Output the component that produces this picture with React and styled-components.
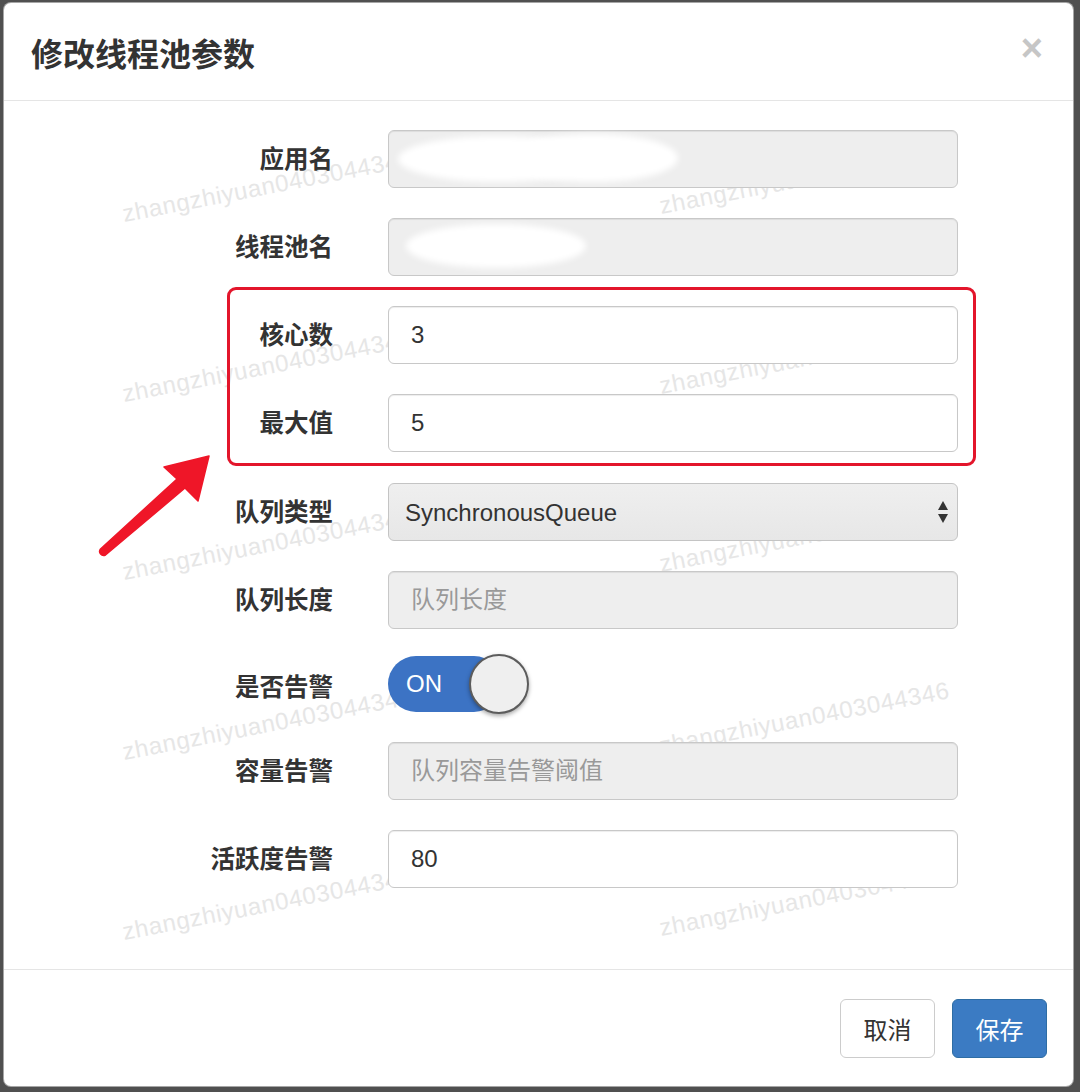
import React from "react"
import styled, { createGlobalStyle } from "styled-components"

const GlobalStyle = createGlobalStyle`
  * { box-sizing: border-box; }
  body {
    margin: 0;
    background: #505050;
    font-family: "Liberation Sans", "Noto Sans CJK SC", sans-serif;
    color: #333;
  }
`

const Modal = styled.div`
  position: relative;
  width: 1071px;
  height: 1085px;
  margin: 2px 0 0 3px;
  background: #fff;
  border: 1px solid rgba(0, 0, 0, 0.35);
  border-radius: 8px;
  overflow: hidden;
  display: flex;
  flex-direction: column;
`

const Header = styled.div`
  height: 98px;
  flex: none;
  display: flex;
  align-items: center;
  justify-content: space-between;
  padding: 0 30px 0 27px;
  border-bottom: 1px solid #e5e5e5;
`

const Title = styled.h4`
  margin: 0;
  font-family: "Noto Sans CJK SC", sans-serif;
  font-size: 32px;
  font-weight: 700;
  color: #333;
`

const Close = styled.button`
  border: 0;
  background: none;
  padding: 0;
  font-family: "Liberation Sans", sans-serif;
  font-size: 38px;
  font-weight: 700;
  line-height: 1;
  color: #c6c6c6;
  margin-top: -8px;
`

const Body = styled.div`
  position: relative;
  z-index: 1;
  flex: 1;
  padding: 29px 0 0;
  display: flex;
  flex-direction: column;
  gap: 30px;
`

const Row = styled.div`
  display: grid;
  grid-template-columns: ${(p) => p.$labelWidth || 384}px 570px;
  align-items: center;
  height: ${(p) => p.$height || 58}px;
`

const Label = styled.label`
  text-align: right;
  padding-right: 55px;
  margin-top: -3px;
  font-family: "Noto Sans CJK SC", sans-serif;
  font-size: 24.5px;
  font-weight: 700;
  color: #333;
`

const InputWrap = styled.div`
  position: relative;
  height: 58px;
`

const Input = styled.input`
  width: 100%;
  height: 58px;
  padding: 0 22px;
  border: 1px solid #c8c8c8;
  border-radius: 6px;
  background: ${(p) => (p.disabled ? "#eee" : "#fff")};
  box-shadow: inset 0 1px 1px rgba(0, 0, 0, 0.075);
  font-family: "Liberation Sans", "Noto Sans CJK SC", sans-serif;
  font-size: 24px;
  color: #333;
  outline: none;
  &::placeholder {
    color: #999;
  }
`

const Smudge = styled.span`
  position: absolute;
  background: #fff;
  border-radius: 50%;
  filter: blur(3px);
`

const Highlight = styled.div`
  margin: -19px 0 -13px 223px;
  width: 749px;
  border: 3px solid #e3152b;
  border-radius: 9px;
  padding: 16px 0 11px;
  display: flex;
  flex-direction: column;
  gap: 30px;
`

const SelectWrap = styled.div`
  position: relative;
  height: 58px;
`

const Select = styled.select`
  appearance: none;
  -webkit-appearance: none;
  width: 100%;
  height: 58px;
  padding: 0 16px;
  border: 1px solid #c4c4c4;
  border-radius: 6px;
  background: linear-gradient(#efefef, #e7e7e7);
  font-family: "Liberation Sans", sans-serif;
  font-size: 24px;
  color: #333;
  outline: none;
`

const SelectArrows = styled.svg`
  position: absolute;
  right: 9px;
  top: 17px;
  pointer-events: none;
`

const Toggle = styled.div`
  position: relative;
  width: 143px;
  height: 60px;
  margin-top: -5px;
  display: flex;
  align-items: center;
`

const Track = styled.div`
  width: 114px;
  height: 56px;
  border-radius: 28px;
  background: #3c73c4;
  color: #fff;
  font-family: "Liberation Sans", sans-serif;
  font-size: 24px;
  display: flex;
  align-items: center;
  padding-left: 18px;
`

const Knob = styled.span`
  position: absolute;
  left: 81px;
  top: 0;
  width: 60px;
  height: 60px;
  border-radius: 50%;
  background: #efefef;
  border: 2px solid #5c5c5c;
  box-shadow: 0 2px 4px rgba(0, 0, 0, 0.35);
`

const Footer = styled.div`
  flex: none;
  display: flex;
  justify-content: flex-end;
  gap: 17px;
  padding: 29px 26px 28px;
  border-top: 1px solid #e5e5e5;
`

const Button = styled.button`
  width: 95px;
  height: 59px;
  border-radius: 6px;
  font-family: "Noto Sans CJK SC", sans-serif;
  font-size: 24px;
  border: 1px solid ${(p) => (p.$primary ? "#2e6da4" : "#ccc")};
  background: ${(p) => (p.$primary ? "#3b7bc3" : "#fff")};
  color: ${(p) => (p.$primary ? "#fff" : "#333")};
`

const WatermarkLayer = styled.div`
  position: absolute;
  inset: 0;
  z-index: 0;
  pointer-events: none;
`

const Watermark = styled.span`
  position: absolute;
  left: ${(p) => p.$x - 4}px;
  top: ${(p) => p.$y - 3 - 24}px;
  line-height: 24px;
  font-family: "Liberation Sans", sans-serif;
  font-size: 24px;
  letter-spacing: 0.6px;
  color: #e6e6e6;
  white-space: nowrap;
  transform: rotate(-11deg);
  transform-origin: 0 100%;
`

const Annotation = styled.svg`
  position: absolute;
  left: -4px;
  top: -3px;
  z-index: 2;
  pointer-events: none;
`

const marks = [
  [125, 226], [662, 218],
  [125, 406], [662, 398],
  [125, 584], [662, 576],
  [125, 764], [662, 758],
  [125, 944], [662, 940],
]

const Field = ({ label, labelWidth, ...props }) => (
  <Row $labelWidth={labelWidth}>
    <Label>{label}</Label>
    <Input {...props} />
  </Row>
)

export default function App() {
  return (
    <>
      <GlobalStyle />
      <Modal>
        <WatermarkLayer>
          {marks.map(([x, y]) => (
            <Watermark key={`${x}-${y}`} $x={x} $y={y}>
              zhangzhiyuan0403044346
            </Watermark>
          ))}
        </WatermarkLayer>

        <Header>
          <Title>修改线程池参数</Title>
          <Close type="button">×</Close>
        </Header>

        <Body>
          <Row>
            <Label>应用名</Label>
            <InputWrap>
              <Input disabled defaultValue="" />
              <Smudge style={{ left: 10, top: 6, width: 200, height: 46 }} />
              <Smudge style={{ left: 120, top: 4, width: 170, height: 48 }} />
            </InputWrap>
          </Row>
          <Row>
            <Label>线程池名</Label>
            <InputWrap>
              <Input disabled defaultValue="" />
              <Smudge style={{ left: 18, top: 6, width: 180, height: 44 }} />
            </InputWrap>
          </Row>

          <Highlight>
            <Field label="核心数" labelWidth={158} defaultValue="3" />
            <Field label="最大值" labelWidth={158} defaultValue="5" />
          </Highlight>

          <Row>
            <Label>队列类型</Label>
            <SelectWrap>
              <Select defaultValue="SynchronousQueue">
                <option>SynchronousQueue</option>
                <option>LinkedBlockingQueue</option>
                <option>ArrayBlockingQueue</option>
              </Select>
              <SelectArrows width="12" height="24" viewBox="0 0 12 24">
                <path d="M6 1 L11 10 L1 10 Z" fill="#333" />
                <path d="M1 14 L11 14 L6 23 Z" fill="#333" />
              </SelectArrows>
            </SelectWrap>
          </Row>
          <Field label="队列长度" disabled placeholder="队列长度" />
          <Row $height={53}>
            <Label>是否告警</Label>
            <Toggle>
              <Track>ON</Track>
              <Knob />
            </Toggle>
          </Row>
          <Field label="容量告警" disabled placeholder="队列容量告警阈值" />
          <Field label="活跃度告警" defaultValue="80" />
        </Body>

        <Footer>
          <Button type="button">取消</Button>
          <Button type="button" $primary>
            保存
          </Button>
        </Footer>

        <Annotation width="300" height="600" viewBox="0 0 300 600">
          <path
            d="M209 456 L164 467 L177 479 L100.5 549 A4 4 0 0 0 105.5 555 L185 488 L198 501 Z"
            fill="#ef1628"
            stroke="#ef1628"
            strokeWidth="1.5"
            strokeLinejoin="round"
          />
        </Annotation>
      </Modal>
    </>
  )
}
